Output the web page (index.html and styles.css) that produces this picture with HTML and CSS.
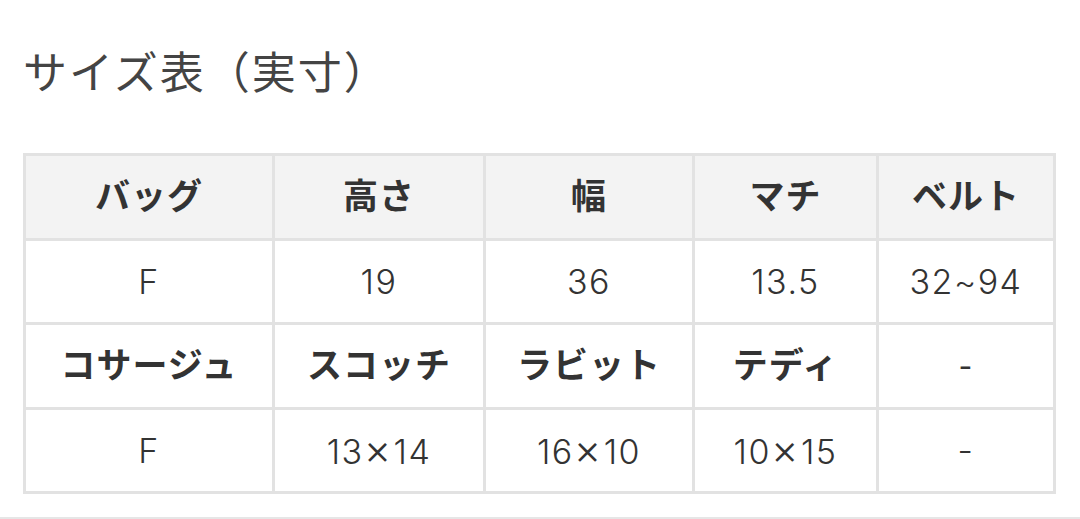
FILE: index.html
```html
<!DOCTYPE html>
<html lang="ja">
<head>
<meta charset="utf-8">
<link rel="stylesheet" href="styles.css">
</head>
<body>
<div class="page">
  <h2 class="title">サイズ表（実寸）</h2>
  <table class="size-table">
    <colgroup>
      <col class="c1"><col class="c2"><col class="c3"><col class="c4"><col class="c5">
    </colgroup>
    <tr class="head first"><th>バッグ</th><th>高さ</th><th>幅</th><th>マチ</th><th>ベルト</th></tr>
    <tr><td>F</td><td>19</td><td>36</td><td>13.5</td><td>32~94</td></tr>
    <tr class="head"><th>コサージュ</th><th>スコッチ</th><th>ラビット</th><th>テディ</th><th class="dash">-</th></tr>
    <tr><td>F</td><td>13<span class="x">×</span>14</td><td>16<span class="x">×</span>10</td><td>10<span class="x">×</span>15</td><td>-</td></tr>
  </table>
</div>
<div class="rule"></div>
</body>
</html>
```
FILE: styles.css
```css
html, body {
  margin: 0;
  padding: 0;
  background: #ffffff;
}
body {
  font-family: "Noto Sans CJK JP", "Noto Sans", sans-serif;
  color: #333333;
  width: 1080px;
  height: 519px;
  position: relative;
  overflow: hidden;
}
.page {
  padding: 0 0 0 23px;
}
.title {
  margin: 0;
  padding-top: 40px;
  font-size: 44px;
  line-height: 60px;
  font-weight: 400;
  color: #444444;
  letter-spacing: 2px;
}
.size-table {
  margin-top: 53px;
  border-collapse: collapse;
  table-layout: fixed;
  width: 1030px;
}
.c1 { width: 249px; }
.c2 { width: 211px; }
.c3 { width: 209px; }
.c4 { width: 184px; }
.c5 { width: 177px; }
.size-table th,
.size-table td {
  border: 3px solid #e2e2e2;
  height: 81.5px;
  padding: 0;
  text-align: center;
  vertical-align: middle;
  color: #333333;
}
.size-table th {
  font-weight: 700;
  font-size: 35px;
  letter-spacing: 1px;
  height: 75.5px;
  padding-bottom: 6px;
}
.size-table th.dash {
  font-family: "Inter", "Noto Sans", sans-serif;
  font-weight: 400;
  font-size: 30px;
  padding-bottom: 0;
  height: 81.5px;
}
.size-table tr.first th {
  background: #f3f3f3;
}
.size-table td {
  font-family: "Inter", "Noto Sans", "Noto Sans CJK JP", sans-serif;
  font-weight: 300;
  font-size: 34px;
  letter-spacing: 1.5px;
}
.size-table td .x {
  font-size: 42px;
  line-height: 1;
  margin: 0 1px 0 0;
}
.rule {
  position: absolute;
  left: 0;
  right: 0;
  top: 517px;
  height: 2px;
  background: #e6e6e6;
}
```
